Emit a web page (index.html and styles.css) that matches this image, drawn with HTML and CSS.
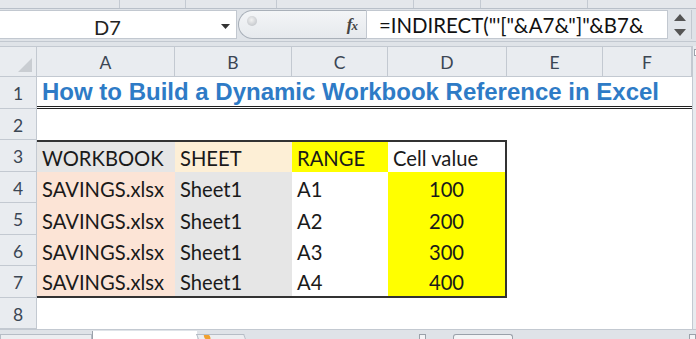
FILE: index.html
```html
<!DOCTYPE html>
<html>
<head>
<meta charset="utf-8">
<link rel="stylesheet" href="styles.css">
</head>
<body>
<div class="app">
  <div class="edge">
    <span class="seg s1"></span><span class="seg s2"></span><span class="seg s3"></span><span class="seg s4"></span><span class="seg s5"></span><span class="seg s6"></span>
  </div>
  <div class="fbar">
    <div class="namebox">
      <span class="nb-text">D7</span>
      <svg class="nb-arrow" width="9" height="5" viewBox="0 0 9 5"><path d="M0 0H9L4.5 5Z" fill="#333"/></svg>
    </div>
    <div class="fpill">
      <span class="knob"></span>
      <span class="fx">f<span class="fxx">x</span></span>
    </div>
    <div class="formula">=INDIRECT("'["&amp;A7&amp;"]"&amp;B7&amp;</div>
    <div class="spin">
      <svg width="12" height="7" viewBox="0 0 12 7"><path d="M6 0L12 7H0Z" fill="#555"/></svg>
      <svg width="12" height="7" viewBox="0 0 12 7"><path d="M0 0H12L6 7Z" fill="#555"/></svg>
    </div>
    <div class="fbar-end"></div>
  </div>
  <div class="sheetwrap">
    <div class="grid">
      <div class="corner"><span class="tri"></span></div>
      <div class="ch">A</div><div class="ch">B</div><div class="ch">C</div><div class="ch">D</div><div class="ch">E</div><div class="ch">F</div>

      <div class="rh">1</div>
      <div class="title">How to Build a Dynamic Workbook Reference in Excel</div>

      <div class="rh">2</div>
      <div class="blank span6"></div>

      <div class="rh">3</div>
      <div class="c top gray">WORKBOOK</div>
      <div class="c top peach">SHEET</div>
      <div class="c top yellow">RANGE</div>
      <div class="c top right white">Cell value</div>
      <div class="c white"></div><div class="c white"></div>

      <div class="rh">4</div>
      <div class="c salmon">SAVINGS.xlsx</div>
      <div class="c gray">Sheet1</div>
      <div class="c white">A1</div>
      <div class="c right yellow num">100</div>
      <div class="c white"></div><div class="c white"></div>

      <div class="rh">5</div>
      <div class="c salmon">SAVINGS.xlsx</div>
      <div class="c gray">Sheet1</div>
      <div class="c white">A2</div>
      <div class="c right yellow num">200</div>
      <div class="c white"></div><div class="c white"></div>

      <div class="rh">6</div>
      <div class="c salmon">SAVINGS.xlsx</div>
      <div class="c gray">Sheet1</div>
      <div class="c white">A3</div>
      <div class="c right yellow num">300</div>
      <div class="c white"></div><div class="c white"></div>

      <div class="rh">7</div>
      <div class="c bottom salmon">SAVINGS.xlsx</div>
      <div class="c bottom gray">Sheet1</div>
      <div class="c bottom white">A4</div>
      <div class="c bottom right yellow num">400</div>
      <div class="c white"></div><div class="c white"></div>

      <div class="rh">8</div>
      <div class="blank span6"></div>
    </div>
    <div class="vscroll"><span class="vs-btn"></span></div>
  </div>
  <div class="tabs">
    <span class="tab-nav"></span>
    <span class="tab-active"></span>
    <span class="tab-new"><span class="star"></span></span>
    <span class="tab-fill"></span>
    <span class="hs-btn"></span>
    <span class="hs-thumb"></span>
    <span class="hs-track"></span>
    <span class="hs-btn"></span>
  </div>
</div>
</body>
</html>
```
FILE: styles.css
```css
* { box-sizing: border-box; }
html, body { margin: 0; padding: 0; }
body {
  width: 696px;
  height: 339px;
  overflow: hidden;
  background: #dfe3e8;
  font-family: "Lato", "Liberation Sans", sans-serif;
}
.app {
  display: flex;
  flex-direction: column;
  width: 696px;
  height: 339px;
}
.edge {
  height: 9px;
  display: flex;
  background: #e4e7eb;
  border-bottom: 1px solid #b9c0c9;
}
.seg { height: 8px; border-right: 1px solid #c4cad2; }
.s1 { width: 120px; }
.s2 { width: 66px; }
.s3 { width: 91px; }
.s4 { width: 137px; }
.s5 { width: 67px; }
.s6 { width: 107px; }

.fbar {
  height: 33px;
  display: flex;
  align-items: stretch;
  padding: 1px 0 2px 0;
  background: #dfe3e8;
  border-bottom: 1px solid #c2c8d0;
}
.namebox {
  width: 237px;
  background: #fff;
  display: flex;
  align-items: center;
  border: 1px solid #c2c8d0;
  border-left: none;
  position: relative;
}
.nb-text {
  position: absolute;
  left: 94px;
  top: 4px;
  font-size: 20px;
  color: #222;
}
.nb-arrow { position: absolute; left: 221px; top: 13px; }
.fpill {
  width: 129px;
  margin-left: 1px;
  background: linear-gradient(#f3f5f7, #e6e9ed);
  border: 1px solid #a9b0b9;
  border-right: 1px solid #c2c8d0;
  border-radius: 15px 0 0 15px;
  display: flex;
  align-items: center;
  justify-content: space-between;
  padding: 0 9px 0 8px;
}
.knob {
  width: 10px;
  height: 10px;
  border-radius: 50%;
  background: radial-gradient(circle at 45% 40%, #f2f2f2 0%, #c8cbcf 70%, #a8adb3 100%);
  margin-top: -7px;
}
.fx {
  font-family: "Liberation Serif", serif;
  font-style: italic;
  font-weight: bold;
  font-size: 17px;
  color: #444;
  letter-spacing: -1px;
}
.fxx { font-size: 13px; }
.formula {
  width: 301px;
  background: #fff;
  border: 1px solid #c2c8d0;
  border-left: none;
  font-size: 20.4px;
  color: #111;
  padding: 2px 0 0 12px;
  white-space: nowrap;
  overflow: hidden;
}
.spin {
  width: 24px;
  display: flex;
  flex-direction: column;
  align-items: center;
  justify-content: center;
  gap: 8px;
  background: #e1e5ea;
  border-right: 1px solid #c2c8d0;
}
.fbar-end { flex: 1; background: #dfe3e8; }

.sheetwrap {
  margin-top: 4px;
  display: flex;
  height: 283px;
}
.grid {
  width: 692px;
  display: grid;
  grid-template-columns: 37px 138px 117px 96px 119px 96px 89px;
  grid-template-rows: 31px repeat(8, 31.5px);
  background: #fff;
  font-size: 20.2px;
  color: #1a1a1a;
}
.corner {
  background: #e9ecf0;
  border-right: 1px solid #c3c9d1;
  border-bottom: 1px solid #c3c9d1;
  border-top: 1px solid #c3c9d1;
  position: relative;
}
.tri {
  position: absolute;
  right: 4px;
  bottom: 4px;
  width: 0;
  height: 0;
  border-left: 14px solid transparent;
  border-bottom: 14px solid #c9cdd2;
}
.ch {
  background: #e9ecf0;
  border-right: 1px solid #c3c9d1;
  border-bottom: 1px solid #c3c9d1;
  border-top: 1px solid #c3c9d1;
  display: flex;
  align-items: center;
  justify-content: center;
  font-size: 17.5px;
  color: #3b4654;
  padding-top: 1px;
}
.rh {
  background: #e9ecf0;
  border-right: 1px solid #c3c9d1;
  border-bottom: 1px solid #c3c9d1;
  display: flex;
  align-items: center;
  justify-content: center;
  font-size: 17.5px;
  color: #3b4654;
  padding-top: 3px;
}
.title {
  grid-column: 2 / span 6;
  border-bottom: 3px double #222;
  font-family: "Liberation Sans", Arial, sans-serif;
  font-weight: bold;
  font-size: 24px;
  color: #2e7bc6;
  display: flex;
  align-items: center;
  padding: 2px 0 0 5px;
  white-space: nowrap;
}
.span6 { grid-column: 2 / span 6; }
.blank { background: #fff; }
.c {
  display: flex;
  align-items: flex-end;
  padding: 0 0 2px 5px;
  white-space: nowrap;
}
.num { justify-content: center; padding-left: 0; }
.top { border-top: 2px solid #333; }
.right { border-right: 2px solid #333; }
.bottom { border-bottom: 2px solid #333; }
.gray { background: #e6e6e6; }
.peach { background: #fdefd6; }
.yellow { background: #ffff00; }
.white { background: #fff; }
.salmon { background: #fce4d6; }

.vscroll {
  flex: 1;
  background: #e8ebef;
  border-left: 1px solid #c3c9d1;
  position: relative;
}
.vs-btn {
  position: absolute;
  left: 1px;
  top: 3px;
  width: 6px;
  height: 7px;
  border: 1px solid #9aa1aa;
  background: #fff;
}

.tabs {
  flex: 1;
  display: flex;
  align-items: flex-end;
  background: #dfe3e8;
  border-top: 1px solid #c3c9d1;
}
.tab-nav {
  width: 92px;
  height: 5px;
  border: 1px solid #b6bdc6;
  border-bottom: none;
  background: #eceef1;
}
.tab-active {
  width: 105px;
  height: 8px;
  background: #fff;
  border-left: 1px solid #9aa1aa;
}
.tab-new {
  width: 48px;
  height: 5px;
  background: #eceef1;
  border: 1px solid #b6bdc6;
  border-bottom: none;
  transform: skewX(20deg);
  position: relative;
}
.star {
  position: absolute;
  left: 6px;
  top: 0;
  width: 6px;
  height: 4px;
  background: #f0a030;
  border-radius: 1px;
}
.tab-fill { width: 174px; }
.hs-btn {
  width: 7px;
  height: 5px;
  border: 1px solid #9aa1aa;
  border-bottom: none;
  background: #f3f4f6;
}
.hs-thumb {
  width: 60px;
  height: 5px;
  margin-left: 27px;
  border: 1px solid #9aa1aa;
  border-bottom: none;
  border-radius: 3px 3px 0 0;
  background: #f3f4f6;
}
.hs-track { flex: 1; }
```
